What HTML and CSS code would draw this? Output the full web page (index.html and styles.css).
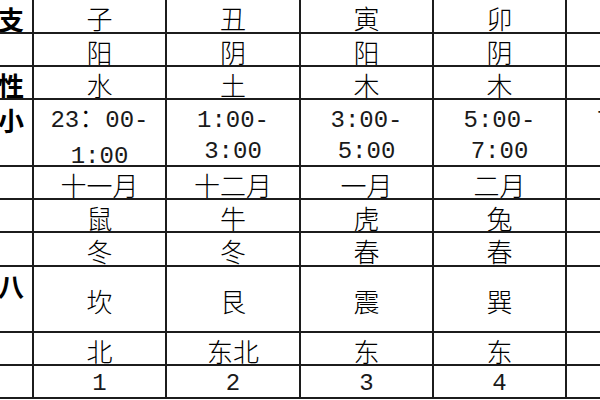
FILE: index.html
```html
<!DOCTYPE html>
<html lang="zh-CN">
<head>
<meta charset="utf-8">
<title>十二地支</title>
<link rel="stylesheet" href="styles.css">
</head>
<body>
<div class="sheet">
  <div class="cell label">十二地支</div>
  <div class="cell">子</div><div class="cell">丑</div><div class="cell">寅</div><div class="cell">卯</div><div class="cell">辰</div>

  <div class="cell label">阴阳</div>
  <div class="cell">阳</div><div class="cell">阴</div><div class="cell">阳</div><div class="cell">阴</div><div class="cell">阳</div>

  <div class="cell label">五行属性</div>
  <div class="cell">水</div><div class="cell">土</div><div class="cell">木</div><div class="cell">木</div><div class="cell">土</div>

  <div class="cell label">时辰大小<br>时段</div>
  <div class="cell time"><span class="stack"><span class="num">23</span>：<span class="num">00-</span><br><span class="num">1:00</span></span></div>
  <div class="cell time"><span class="stack num">1:00-<br>3:00</span></div>
  <div class="cell time"><span class="stack num">3:00-<br>5:00</span></div>
  <div class="cell time"><span class="stack num">5:00-<br>7:00</span></div>
  <div class="cell time"><span class="stack num">7:00-<br>9:00</span></div>

  <div class="cell label">月份</div>
  <div class="cell">十一月</div><div class="cell">十二月</div><div class="cell">一月</div><div class="cell">二月</div><div class="cell">三月</div>

  <div class="cell label">生肖</div>
  <div class="cell">鼠</div><div class="cell">牛</div><div class="cell">虎</div><div class="cell">兔</div><div class="cell">龙</div>

  <div class="cell label">季节</div>
  <div class="cell">冬</div><div class="cell">冬</div><div class="cell">春</div><div class="cell">春</div><div class="cell">春</div>

  <div class="cell label">所属的八<br>卦</div>
  <div class="cell">坎</div><div class="cell">艮</div><div class="cell">震</div><div class="cell">巽</div><div class="cell">巽</div>

  <div class="cell label">方位</div>
  <div class="cell">北</div><div class="cell">东北</div><div class="cell">东</div><div class="cell">东</div><div class="cell">东南</div>

  <div class="cell label">数字</div>
  <div class="cell num">1</div><div class="cell num">2</div><div class="cell num">3</div><div class="cell num">4</div><div class="cell num">5</div>
</div>
</body>
</html>
```

FILE: styles.css
```css
html, body {
  margin: 0;
  padding: 0;
  background: #ffffff;
  overflow: hidden;
  width: 600px;
  height: 400px;
}

.sheet {
  display: grid;
  grid-template-columns: 120px 131px 132px 131px 131px 131px;
  grid-template-rows: 32px 31px 31px 65px 31px 31px 32px 64px 31px 31px;
  gap: 2px;
  padding: 2px;
  width: max-content;
  margin: -2px 0 0 -90px;
  background: #1c1c1c;
  font-family: "Noto Sans CJK SC", "Noto Sans", sans-serif;
  font-weight: 300;
  font-size: 26px;
  color: #000;
}

.cell {
  background: #ffffff;
  display: flex;
  align-items: center;
  justify-content: center;
  text-align: center;
  line-height: 26px;
  padding-top: 4px;
  box-sizing: border-box;
  white-space: nowrap;
  overflow: hidden;
}

.label {
  white-space: normal;
  line-height: 31px;
  font-weight: 700;
}

.time {
  line-height: 31px;
  padding-top: 6px;
}

.stack {
  display: block;
  text-align: center;
}

.num {
  font-family: "Liberation Mono", "DejaVu Sans Mono", monospace;
  font-size: 24px;
  font-weight: 400;
  color: #1a1a1a;
}
```
